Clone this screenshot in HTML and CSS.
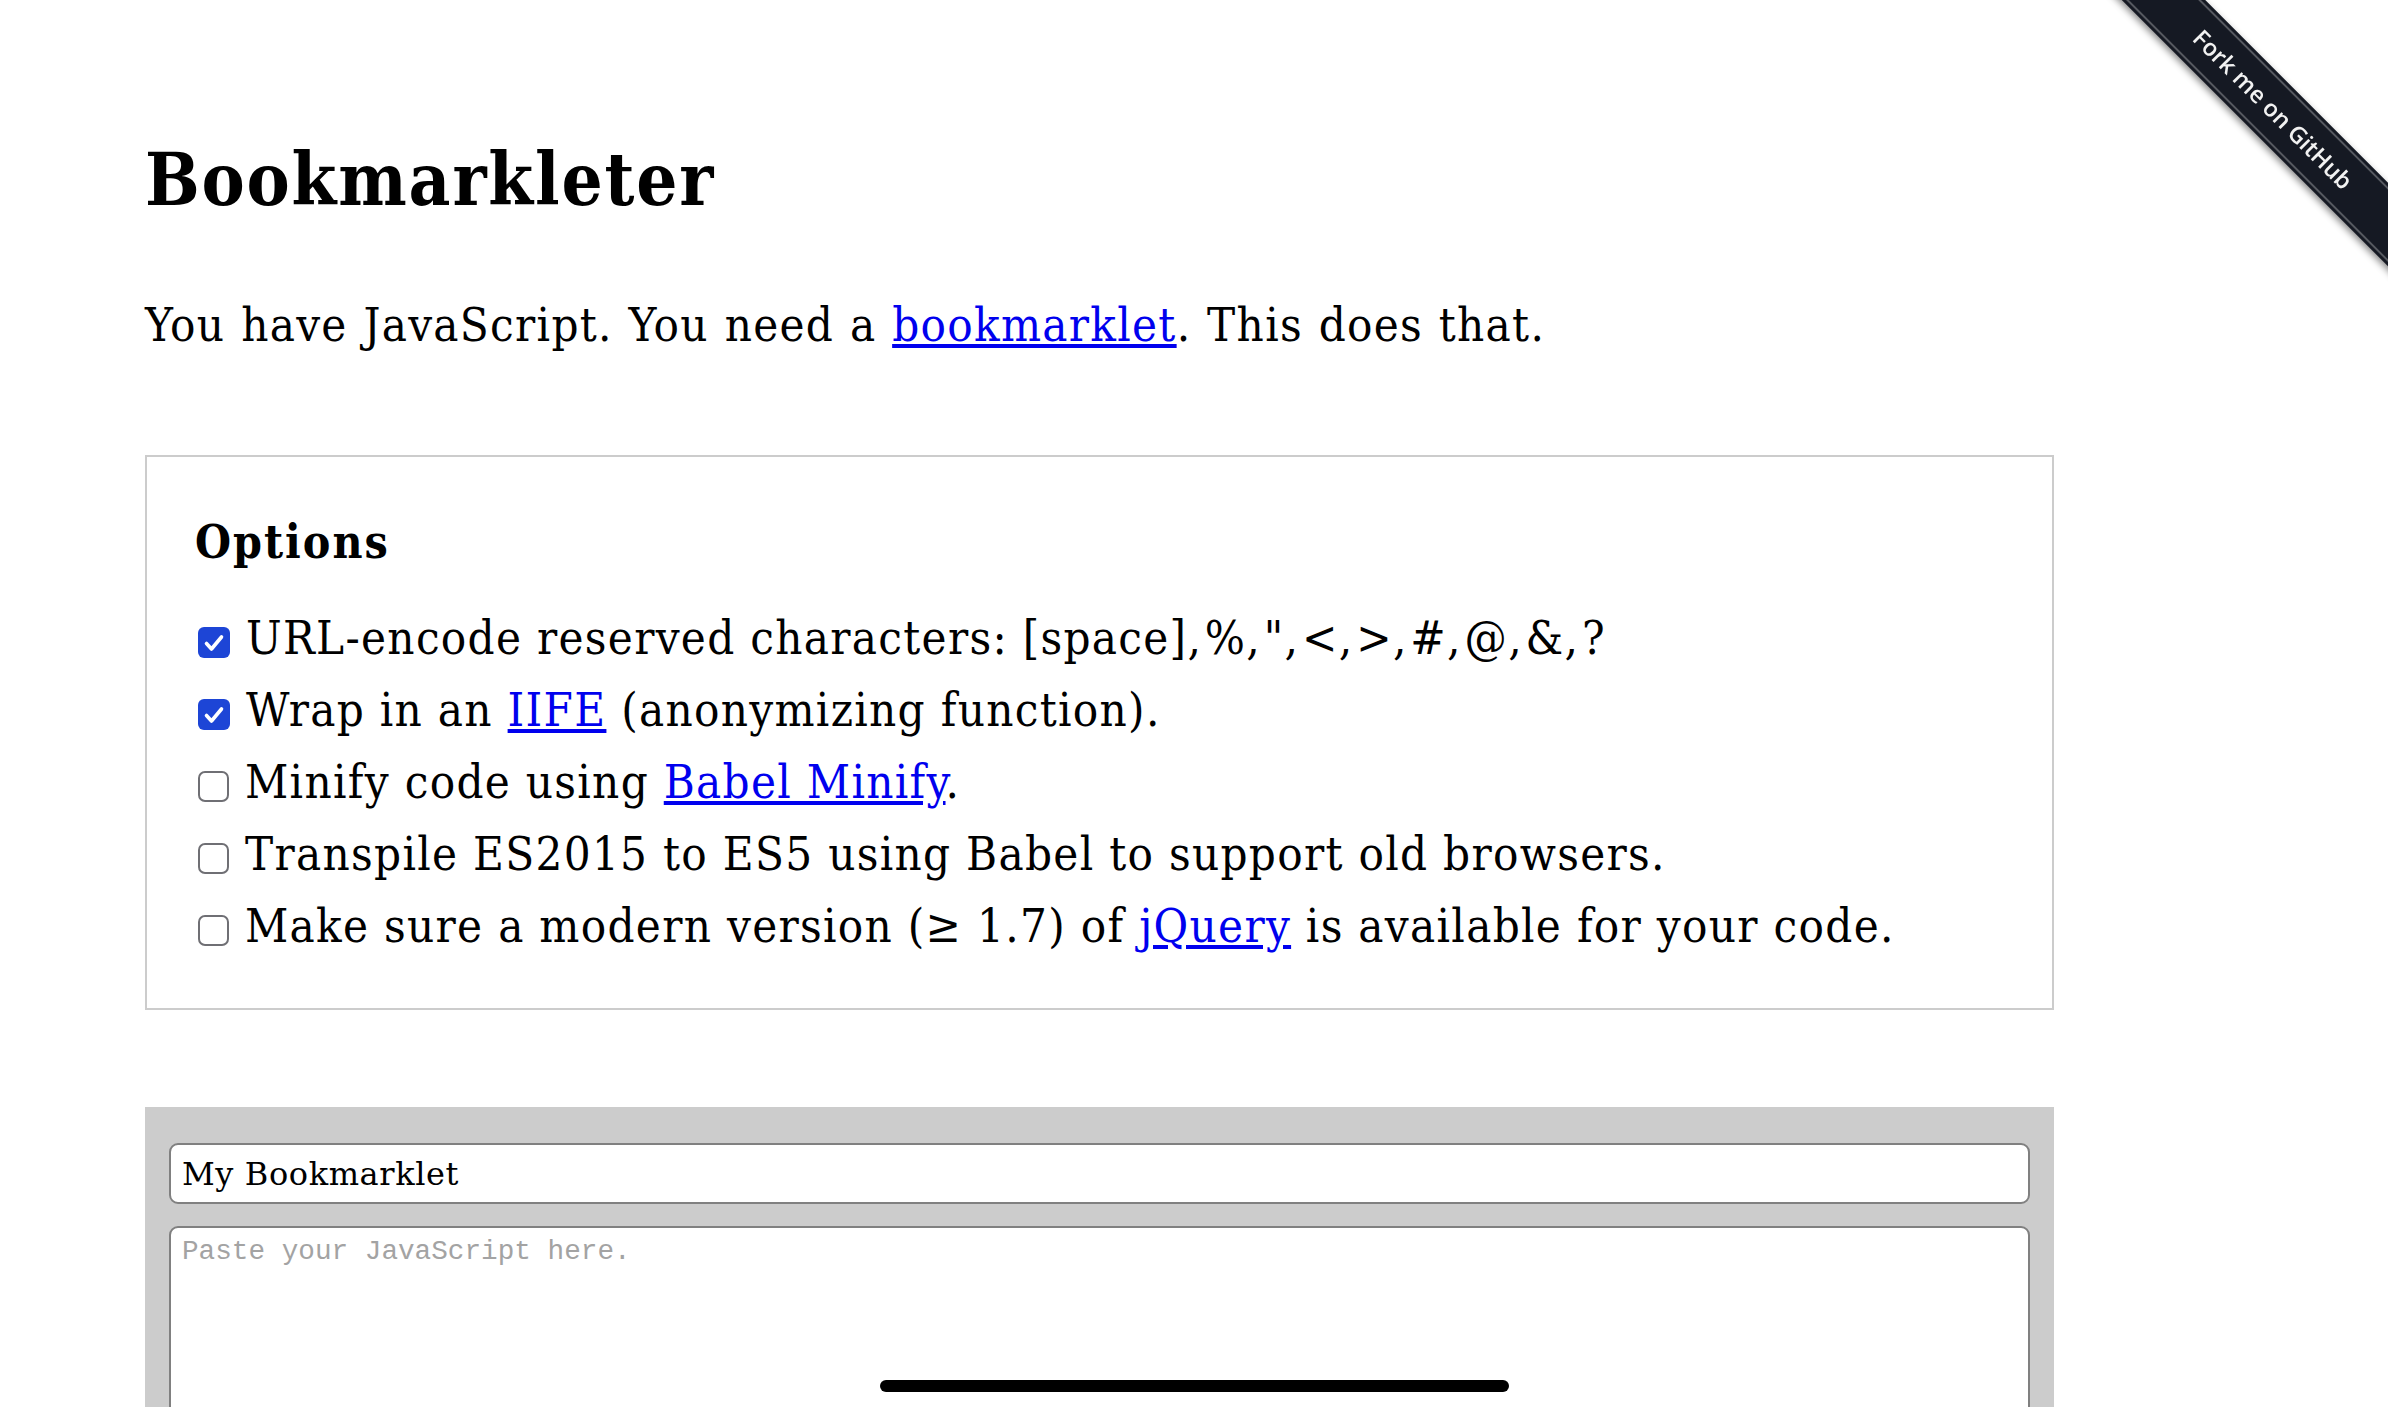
FILE: index.html
```html
<!DOCTYPE html>
<html lang="en">
<head>
<meta charset="utf-8">
<title>Bookmarkleter</title>
<link rel="stylesheet" href="styles.css">
</head>
<body>
<a class="ribbon-wrap" href="#"><span class="ribbon">Fork me on GitHub</span></a>
<main class="page">
  <h1 class="title">Bookmarkleter</h1>
  <p class="intro">You have JavaScript. You need a <a href="#">bookmarklet</a>. This does that.</p>
  <section class="options">
    <h2 class="options-title">Options</h2>
    <ul class="opt-list">
      <li class="opt"><span class="cb checked"><svg viewBox="0 0 32 32" width="32" height="32"><polyline points="8.5,16.5 13.5,22 23.5,10" fill="none" stroke="#fff" stroke-width="3.6" stroke-linecap="round" stroke-linejoin="round"/></svg></span><span>URL-encode reserved characters: <span class="tight">[space], %, ", &lt;, &gt;, #, @, &amp;, ?</span></span></li>
      <li class="opt"><span class="cb checked"><svg viewBox="0 0 32 32" width="32" height="32"><polyline points="8.5,16.5 13.5,22 23.5,10" fill="none" stroke="#fff" stroke-width="3.6" stroke-linecap="round" stroke-linejoin="round"/></svg></span><span>Wrap in an <a href="#">IIFE</a> (anonymizing function).</span></li>
      <li class="opt"><span class="cb"></span><span>Minify code using <a href="#">Babel Minify</a>.</span></li>
      <li class="opt"><span class="cb"></span><span>Transpile ES2015 to ES5 using Babel to support old browsers.</span></li>
      <li class="opt"><span class="cb"></span><span>Make sure a modern version (≥ 1.7) of <a href="#">jQuery</a> is available for your code.</span></li>
    </ul>
  </section>
  <section class="editor">
    <input class="name-input" type="text" value="My Bookmarklet">
    <textarea class="code-input" placeholder="Paste your JavaScript here."></textarea>
  </section>
</main>
<div class="home-indicator"></div>
</body>
</html>
```
FILE: styles.css
```css
html, body {
  margin: 0;
  padding: 0;
  background: #fff;
  overflow: hidden;
}
body {
  font-family: "DejaVu Serif", serif;
  font-stretch: condensed;
  font-size: 47px;
  line-height: 72px;
  letter-spacing: 1.3px;
  color: #000;
}
a { color: #0000ee; }
.page {
  padding: 144px 334px 0 145px;
}
.title {
  margin: 0;
  font-size: 72px;
  line-height: 72px;
  font-weight: bold;
  letter-spacing: 1.8px;
}
.intro {
  margin: 73px 0 0;
  word-spacing: 1px;
}
.options {
  margin-top: 94px;
  border: 2px solid #cccccc;
  padding: 49px 48px 46px;
}
.options-title {
  margin: 0;
  font-size: 46px;
  line-height: 72px;
  font-weight: bold;
  letter-spacing: 2px;
}
.opt-list {
  list-style: none;
  margin: 24px 0 0;
  padding: 0;
}
.opt {
  display: flex;
  align-items: flex-start;
  gap: 16px;
  height: 72px;
  white-space: nowrap;
}
.tight {
  word-spacing: -12px;
}
.cb {
  flex: none;
  box-sizing: border-box;
  width: 31px;
  height: 31px;
  margin: 25px 0 0 3px;
  border: 2.5px solid #6f6f74;
  border-radius: 7px;
  background: #fff;
  display: flex;
  align-items: center;
  justify-content: center;
}
.cb.checked {
  border: none;
  background: #1d45d6;
  border-radius: 6px;
  width: 32px;
}
.cb svg { display: block; width: 32px; height: 32px; }
.editor {
  margin-top: 97px;
  background: #cccccc;
  padding: 36px 24px 0;
  display: flex;
  flex-direction: column;
  gap: 22px;
}
.name-input {
  box-sizing: border-box;
  height: 61px;
  width: 100%;
  border: 2px solid #808080;
  border-radius: 9px;
  padding: 0 11px;
  font-family: "DejaVu Serif", serif;
  font-size: 32px;
  letter-spacing: 0.6px;
  color: #000;
  background: #fff;
  outline: none;
}
.code-input {
  box-sizing: border-box;
  height: 400px;
  width: 100%;
  border: 2px solid #808080;
  border-radius: 9px;
  padding: 8px 11px;
  font-family: "Liberation Mono", monospace;
  font-size: 27.7px;
  letter-spacing: 0;
  resize: none;
  background: #fff;
  outline: none;
}
.code-input::placeholder { color: #a3a3a3; }
.ribbon-wrap {
  position: fixed;
  top: 0;
  right: 0;
  width: 300px;
  height: 300px;
  overflow: hidden;
  text-decoration: none;
}
.ribbon {
  position: absolute;
  left: -65px;
  top: 80px;
  width: 500px;
  height: 59px;
  transform: rotate(45deg);
  background: #151923;
  box-shadow: 0 3px 7px rgba(0, 0, 0, 0.45);
  color: #f2f2f2;
  font-family: "Open Sans", sans-serif;
  font-stretch: normal;
  font-weight: 600;
  font-size: 23.5px;
  letter-spacing: 0;
  line-height: 59px;
  text-align: center;
}
.ribbon::before {
  content: "";
  position: absolute;
  left: 0;
  right: 0;
  top: 3px;
  bottom: 3px;
  border-top: 2px solid rgba(255, 255, 255, 0.28);
  border-bottom: 2px solid rgba(255, 255, 255, 0.28);
}
.home-indicator {
  position: fixed;
  left: 50%;
  bottom: 15px;
  width: 629px;
  height: 12px;
  margin-left: -314px;
  border-radius: 6px;
  background: #000;
}
```
